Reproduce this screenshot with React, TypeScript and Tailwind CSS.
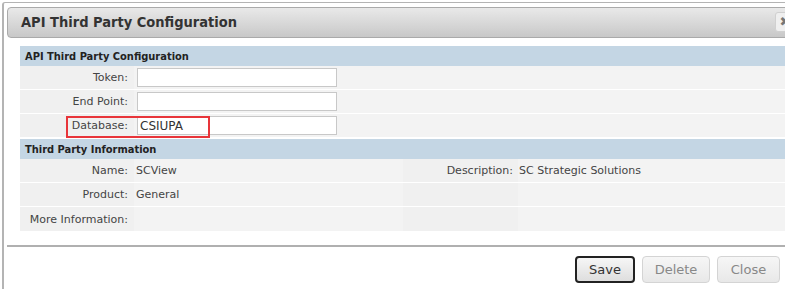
import React from "react";

const font = { fontFamily: '"DejaVu Sans", Verdana, sans-serif' };
const boldFont = { fontFamily: '"DejaVu Sans Condensed", "DejaVu Sans", Verdana, sans-serif' };

function Row({ label, children, last }: { label: string; children?: React.ReactNode; last?: boolean }) {
  return (
    <div className={`flex h-[24px] items-center ${last ? "" : "border-b border-white"}`}>
      <div className="w-[114px] shrink-0 self-stretch flex items-center justify-end pr-[6px] pt-[2px] bg-[#f0f0f0] text-[#444]">{label}</div>
      <div className="flex-1 self-stretch flex items-center pl-[3px] bg-[#f3f3f3]">{children}</div>
    </div>
  );
}

function InfoRow({ l1, v1, l2, v2, last }: { l1: string; v1?: string; l2?: string; v2?: string; last?: boolean }) {
  return (
    <div className={`flex h-[24px] ${last ? "" : "border-b border-white"}`}>
      <div className="w-[114px] shrink-0 flex items-center justify-end pr-[6px] pt-[2px] bg-[#f0f0f0] text-[#444]">{l1}</div>
      <div className="w-[269px] shrink-0 flex items-center pl-[2px] pt-[2px] bg-[#f3f3f3] text-[#444]">{v1}</div>
      <div className="w-[115px] shrink-0 flex items-center justify-end pr-[5px] pt-[2px] bg-[#f0f0f0] text-[#444]">{l2}</div>
      <div className="flex-1 flex items-center pl-[1px] pt-[2px] bg-[#f3f3f3] text-[#444]">{v2}</div>
    </div>
  );
}

export default function App() {
  return (
    <div className="w-[785px] h-[289px] overflow-hidden bg-white text-[11px]" style={font}>
      <div className="ml-[2px] mt-[2px] w-[840px] h-[300px] border-l-2 border-t border-[#b4b4b4] rounded-tl-[3px] pl-[3px] pt-[4px]">
        <div className="h-[31px] w-[830px] rounded-[4px] border border-[#aaa] bg-gradient-to-b from-[#e9e9e9] to-[#c8c8c8] flex items-center pl-[13px] pt-[1px] relative">
          <span className="text-[14.5px] font-bold text-[#333]" style={boldFont}>API Third Party Configuration</span>
          <div className="absolute left-[767px] top-[4px] w-[20px] h-[20px] rounded-[3px] border border-[#d0d0d0] bg-[#efefef] flex items-center justify-center text-[#777] font-bold text-[13px]">✖</div>
        </div>
        <div className="ml-[13px] mt-[8px] w-[820px]">
          <div className="h-[20px] bg-[#c4d6e4] flex items-center pl-[5px] pt-[2px] font-bold text-[#222]" style={boldFont}>API Third Party Configuration</div>
          <Row label="Token:">
            <div className="w-[200px] h-[19px] bg-white border border-[#c8c8c8]" />
          </Row>
          <Row label="End Point:">
            <div className="w-[200px] h-[19px] bg-white border border-[#c8c8c8]" />
          </Row>
          <div className="relative">
            <Row label="Database:">
              <div className="w-[200px] h-[19px] bg-white border border-[#c8c8c8] flex items-center pl-[2px] pt-[1px] text-[#333] text-[12px]">CSIUPA</div>
            </Row>
            <div className="absolute left-[46px] top-[2px] w-[144px] h-[22px] border-2 border-[#e8353a]" />
          </div>
          <div className="h-[20px] mt-[1px] bg-[#c4d6e4] flex items-center pl-[5px] pt-[2px] font-bold text-[#222]" style={boldFont}>Third Party Information</div>
          <InfoRow l1="Name:" v1="SCView" l2="Description:" v2="SC Strategic Solutions" />
          <InfoRow l1="Product:" v1="General" />
          <InfoRow l1="More Information:" last />
        </div>
        <div className="mt-[14px] w-[830px] border-t-2 border-[#b0b0b0]" />
        <div className="w-[773px] flex justify-end gap-[7px] mt-[9px] text-[13px]">
          <div className="w-[60px] h-[27px] rounded-[4px] border-2 border-[#222] bg-gradient-to-b from-[#f6f6f6] to-[#dedede] flex items-center justify-center text-[#333]">Save</div>
          <div className="w-[68px] h-[27px] rounded-[4px] border border-[#d4d4d4] bg-gradient-to-b from-[#f6f6f6] to-[#e8e8e8] flex items-center justify-center text-[#888]">Delete</div>
          <div className="w-[63px] h-[27px] rounded-[4px] border border-[#d4d4d4] bg-gradient-to-b from-[#f6f6f6] to-[#e8e8e8] flex items-center justify-center text-[#888]">Close</div>
        </div>
      </div>
    </div>
  );
}
